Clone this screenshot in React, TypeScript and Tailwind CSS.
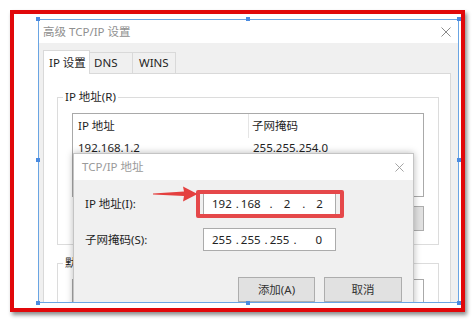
const font = "font-['Noto_Sans','Noto_Sans_CJK_SC',sans-serif]";

function CloseX({ size, color }: { size: number; color: string }) {
  return (
    <svg width={size} height={size} viewBox="0 0 10 10">
      <path d="M0.5 0.5L9.5 9.5M9.5 0.5L0.5 9.5" stroke={color} strokeWidth={1} fill="none" />
    </svg>
  );
}

function GroupBox({ label, className, children }: { label: string; className: string; children: React.ReactNode }) {
  return (
    <div className={`relative border border-[#dcdcdc] pt-[15px] px-[14px] ${className}`}>
      <span className="absolute -top-[9px] left-[5px] bg-white px-[2px] leading-[16px]">{label}</span>
      {children}
    </div>
  );
}

function WinButton({ label, className }: { label: string; className: string }) {
  return (
    <div className={`h-[25px] bg-[#e1e1e1] border border-[#adadad] flex items-center justify-center text-[#333] ${className}`}>
      {label}
    </div>
  );
}

function IpAddressDialog() {
  return (
    <div className="absolute left-[34px] top-[133px] w-[341px] h-[170px] bg-[#f0f0f0] border border-[#c4c4c4] shadow-[0_0_7px_rgba(0,0,0,0.28)] z-20">
      <div className="h-[26px] bg-white flex items-center justify-between pl-[8px] pr-[9px]">
        <span className="text-[#9a9a9a]">TCP/IP 地址</span>
        <CloseX size={9} color="#9a9a9a" />
      </div>
      <div className="pt-[13px] px-[11px]">
        <div className="flex items-center h-[22px]">
          <span className="w-[118px]">IP 地址(I):</span>
          <div className="relative w-[133px] h-[22px] bg-white border border-[#ababab] flex items-center pl-[8px] text-[#222]">
            <span>192</span>
            <span className="ml-[4px]">.</span>
            <span className="ml-[2px]">168</span>
            <span className="ml-[9px]">.</span>
            <span className="ml-[11px]">2</span>
            <span className="ml-[12px]">.</span>
            <span className="ml-[11px]">2</span>
            <div className="absolute -left-[8px] -top-[4px] -right-[9px] -bottom-[4px] border-4 border-[#e5484a] rounded-[2px]" />
            <svg className="absolute -left-[51px] -top-[8px]" width="45" height="16" viewBox="0 0 45 16">
              <polygon points="0,7.6 31,5.6 30,0.5 44.5,8 30,15.5 31,10 0,8.4" fill="#e4403f" />
            </svg>
          </div>
        </div>
        <div className="flex items-center h-[23px] mt-[13px]">
          <span className="w-[118px]">子网掩码(S):</span>
          <div className="w-[133px] h-[23px] bg-white border border-[#ababab] flex items-center pl-[8px] text-[#222]">
            <span>255</span>
            <span className="ml-[4px]">.</span>
            <span className="ml-[2px]">255</span>
            <span className="ml-[4px]">.</span>
            <span className="ml-[2px]">255</span>
            <span className="ml-[4px]">.</span>
            <span className="ml-[19px]">0</span>
          </div>
        </div>
        <div className="flex justify-end gap-[9px] mt-[26px]">
          <WinButton label="添加(A)" className="w-[77px]" />
          <WinButton label="取消" className="w-[78px]" />
        </div>
      </div>
    </div>
  );
}

function AdvancedWindow() {
  return (
    <div className="relative w-full h-full overflow-hidden flex flex-col">
      <div className="h-[23px] shrink-0 bg-white flex items-center justify-between pl-[4px] pr-[7px]">
        <span className="text-[#8f8f8f]">高级 TCP/IP 设置</span>
        <CloseX size={10} color="#8a8a8a" />
      </div>
      <div className="flex-1 bg-[#f0f0f0] pt-[7px] pl-[4px] pr-[7px] flex flex-col">
        <div className="flex items-end relative z-10 -mb-px">
          <div className="w-[47px] h-[24px] bg-white border border-b-0 border-[#d9d9d9] pl-[5px] flex items-center">IP 设置</div>
          <div className="w-[43px] h-[22px] border border-l-0 border-[#d9d9d9] pl-[4px] flex items-center">DNS</div>
          <div className="w-[43px] h-[22px] border border-l-0 border-[#d9d9d9] pl-[6px] flex items-center">WINS</div>
        </div>
        <div className="flex-1 bg-white border border-[#d9d9d9] pl-[13px] pr-[11px] pt-[23px]">
          <GroupBox label="IP 地址(R)" className="h-[148px]">
            <div className="h-[84px] border border-[#a9a9a9]">
              <div className="h-[24px] flex">
                <div className="w-[176px] border-r border-[#e5e5e5] pl-[5px] flex items-center">IP 地址</div>
                <div className="pl-[3px] flex items-center">子网掩码</div>
              </div>
              <div className="h-[20px] flex items-center">
                <div className="w-[176px] pl-[5px]">192.168.1.2</div>
                <div className="pl-[4px]">255.255.254.0</div>
              </div>
            </div>
            <div className="flex justify-end gap-[8px] mt-[9px]">
              <WinButton label="添加(A)..." className="w-[75px]" />
              <WinButton label="编辑(E)..." className="w-[75px]" />
              <WinButton label="删除(V)" className="w-[75px]" />
            </div>
          </GroupBox>
          <GroupBox label="默认网关(F):" className="h-[120px] mt-[18px]">
            <div className="h-[80px] border border-[#a9a9a9]" />
          </GroupBox>
        </div>
      </div>
      <IpAddressDialog />
    </div>
  );
}

export default function App() {
  const handle = "absolute w-[4px] h-[4px] bg-[#4a8be0] z-30";
  return (
    <div className={`w-[476px] h-[325px] bg-white pt-[10px] pl-[10px] text-[11.5px] text-[#1e1e1e] ${font}`}>
      <div className="w-[455px] h-[302px] border-4 border-[#e1080a] shadow-[2px_3px_4px_rgba(0,0,0,0.45)] pl-[24px] pt-[5px]">
        <div className="relative w-[421px] h-[284px] border border-[#6aa5e3]">
          <AdvancedWindow />
          <div className={`${handle} -left-[3px] -top-[3px]`} />
          <div className={`${handle} left-[207px] -top-[3px]`} />
          <div className={`${handle} -right-[3px] -top-[3px]`} />
          <div className={`${handle} -left-[3px] top-[138px]`} />
          <div className={`${handle} -right-[3px] top-[138px]`} />
          <div className={`${handle} -left-[3px] -bottom-[3px]`} />
          <div className={`${handle} left-[207px] -bottom-[3px]`} />
          <div className={`${handle} -right-[3px] -bottom-[3px]`} />
        </div>
      </div>
    </div>
  );
}
